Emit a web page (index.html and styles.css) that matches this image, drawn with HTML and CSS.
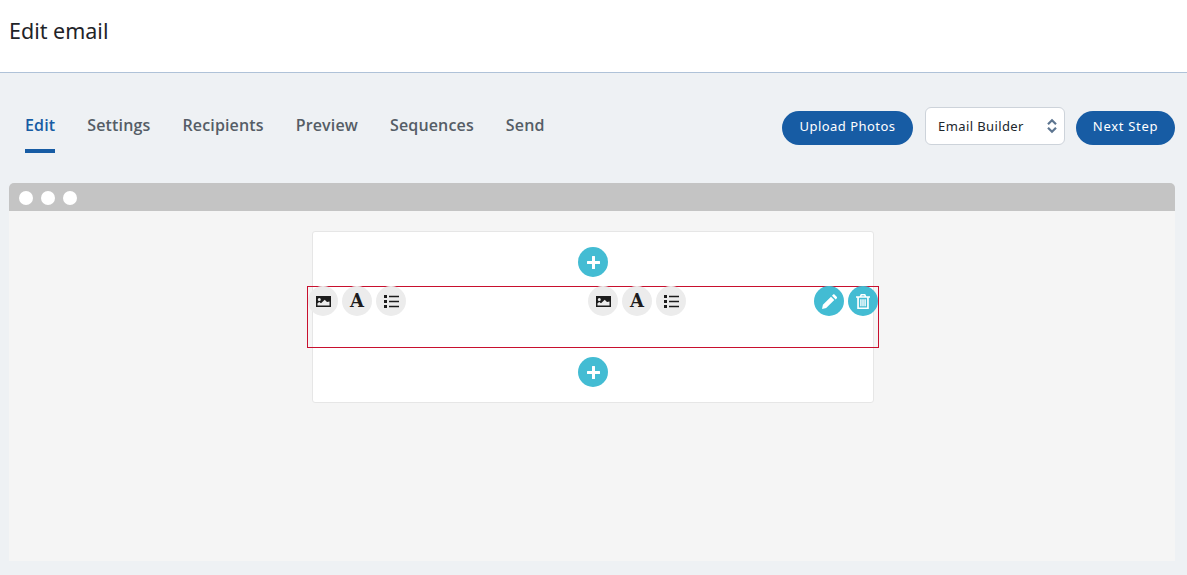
FILE: index.html
```html
<!DOCTYPE html>
<html lang="en">
<head>
<meta charset="utf-8">
<title>Edit email</title>
<link rel="stylesheet" href="styles.css">
</head>
<body>
<header class="page-header"><h1 class="page-title">Edit email</h1></header>
<main class="content">
  <div class="toolbar">
    <nav class="tabs">
      <a class="tab active">Edit</a>
      <a class="tab">Settings</a>
      <a class="tab">Recipients</a>
      <a class="tab">Preview</a>
      <a class="tab">Sequences</a>
      <a class="tab">Send</a>
    </nav>
    <div class="actions">
      <button class="pill upload">Upload Photos</button>
      <div class="select"><span>Email Builder</span>
        <svg class="updown" viewBox="0 0 10 16"><path d="M1 6.200 5 2.200 9 6.200M1 9.800 5 13.800 9 9.800" fill="none" stroke="#5d7590" stroke-width="2.200"/></svg>
      </div>
      <button class="pill next">Next Step</button>
    </div>
  </div>
  <section class="window">
    <div class="window-bar"><i class="dot"></i><i class="dot"></i><i class="dot"></i></div>
    <div class="window-body">
      <div class="card">
        <div class="add-zone top"><button class="round teal"><svg class="i-plus" viewBox="0 0 13 13"><path d="M5 .5Q5 0 5.500 0h2q.5 0 .5.500V5h4.500q.5 0 .5.500v2q0 .5-.5.500H8v4.500q0 .5-.5.500h-2q-.5 0-.5-.5V8H.5Q0 8 0 7.500v-2Q0 5 .5 5H5z" fill="#fff"/></svg></button></div>
        <div class="row-box">
          <div class="tools">
            <button class="round grey"><svg class="i-image" viewBox="0 0 15 11"><path fill-rule="evenodd" d="M0 0h15v11H0zM3.300 2a1.500 1.500 0 1 1 0 3 1.500 1.500 0 0 1 0-3zM1.500 9.500V7.200l1.800-1.300 1.700 1.300 3.700-3.500 2.300 2.200 2.500-.4v4z" fill="#1c1c1c"/></svg></button>
            <button class="round grey letter">A</button>
            <button class="round grey"><svg class="i-list" viewBox="0 0 15 13"><path d="M0 0h3v3H0zM0 5h3v3H0zM0 10h3v3H0zM5 .7h10v1.600H5zM5 5.700h10v1.600H5zM5 10.700h10v1.600H5z" fill="#1c1c1c"/></svg></button>
          </div>
          <div class="tools second">
            <button class="round grey"><svg class="i-image" viewBox="0 0 15 11"><path fill-rule="evenodd" d="M0 0h15v11H0zM3.300 2a1.500 1.500 0 1 1 0 3 1.500 1.500 0 0 1 0-3zM1.500 9.500V7.200l1.800-1.300 1.700 1.300 3.700-3.500 2.300 2.200 2.500-.4v4z" fill="#1c1c1c"/></svg></button>
            <button class="round grey letter">A</button>
            <button class="round grey"><svg class="i-list" viewBox="0 0 15 13"><path d="M0 0h3v3H0zM0 5h3v3H0zM0 10h3v3H0zM5 .7h10v1.600H5zM5 5.700h10v1.600H5zM5 10.700h10v1.600H5z" fill="#1c1c1c"/></svg></button>
          </div>
          <div class="tools third">
            <button class="round teal"><svg class="i-pencil" viewBox="0 0 15 15"><path d="M0 15l.9-4.200L9 2.700l3.300 3.300-8.100 8.100zM10 1.700l.9-.9c.6-.6 1.300-.6 1.800-.1l2 2c.5.500.5 1.200-.1 1.800l-.9.900z" fill="#fff"/></svg></button>
            <button class="round teal"><svg class="i-trash" viewBox="0 0 14 15"><path fill-rule="evenodd" d="M0 2.200h3.700L4.800 0h4.400l1.100 2.200H14v1.600h-1.200V15H1.200V3.800H0zM5.400 2.200h3.200l-.4-.8H5.800zM2.900 3.800v9.600h8.200V3.800zM4.200 5.300h1.400v6.900H4.200zM6.300 5.300h1.400v6.900H6.300zM8.400 5.300h1.400v6.900H8.400z" fill="#fff"/></svg></button>
          </div>
        </div>
        <div class="add-zone bottom"><button class="round teal"><svg class="i-plus" viewBox="0 0 13 13"><path d="M5 .5Q5 0 5.500 0h2q.5 0 .5.500V5h4.500q.5 0 .5.500v2q0 .5-.5.500H8v4.500q0 .5-.5.500h-2q-.5 0-.5-.5V8H.5Q0 8 0 7.500v-2Q0 5 .5 5H5z" fill="#fff"/></svg></button></div>
      </div>
    </div>
  </section>
</main>
</body>
</html>
```

FILE: styles.css
```css
* { box-sizing: border-box; }
html, body { margin: 0; height: 100%; }
body {
  background: #eef1f4;
  font-family: "Open Sans", "Noto Sans", sans-serif;
  overflow: hidden;
}
.page-header {
  height: 73px;
  background: #fff;
  border-bottom: 1px solid #afc2d8;
  padding: 17px 9px 0;
}
.page-title {
  margin: 0;
  font: 400 21.5px/28px "Noto Sans", sans-serif;
  color: #1f2429;
}
.content { padding: 0 12px 0 9px; }
.toolbar {
  display: flex;
  justify-content: space-between;
  height: 110px;
}
.tabs {
  display: flex;
  gap: 32px;
  padding: 39px 0 0 16px;
}
.tab {
  height: 41px;
  font-size: 16px;
  font-weight: 600;
  line-height: 26px;
  letter-spacing: .15px;
  color: #555d66;
}
.tab.active {
  color: #175ca4;
  border-bottom: 4px solid #175ca4;
}
.actions {
  display: flex;
  align-items: flex-start;
  padding-top: 34px;
}
.pill {
  height: 34px;
  margin-top: 4px;
  padding: 0 0 5px;
  border: 0;
  border-radius: 17px;
  background: #175ca4;
  color: #fff;
  font: 400 13px "Noto Sans", sans-serif;
  letter-spacing: .45px;
}
.upload { width: 131px; }
.next { width: 99px; letter-spacing: .7px; }
.select {
  width: 140px;
  height: 38px;
  margin: 0 11px 0 12px;
  padding: 0 12px;
  display: flex;
  align-items: center;
  justify-content: space-between;
  background: #fff;
  border: 1px solid #cdd3da;
  border-radius: 6px;
  color: #20262c;
  font: 400 13px "Noto Sans", sans-serif;
  letter-spacing: .4px;
}
.updown { width: 10px; height: 16px; margin-right: -5px; }
.window { width: 1166px; }
.window-bar {
  height: 28px;
  background: #c4c4c4;
  border-radius: 5px 5px 0 0;
  display: flex;
  align-items: center;
  gap: 8px;
  padding: 2px 10px 0;
}
.dot { width: 14px; height: 14px; border-radius: 50%; background: #fff; }
.window-body {
  height: 350px;
  background: #f5f5f5;
  padding-top: 20px;
}
.card {
  width: 562px;
  height: 172px;
  margin-left: 303px;
  background: #fff;
  border: 1px solid #e6e6e6;
  border-radius: 3px;
}
.add-zone { display: flex; justify-content: center; }
.add-zone.top { height: 54px; padding-top: 15px; }
.add-zone.bottom { padding-top: 9px; }
.round {
  width: 30px;
  height: 30px;
  padding: 0;
  border: 0;
  border-radius: 50%;
  display: flex;
  align-items: center;
  justify-content: center;
  flex: none;
}
.teal { background: #43bcd3; }
.grey { background: #ececec; }
.letter {
  font: 700 18px/30px "DejaVu Serif", serif;
  color: #1c1c1c;
}
.i-plus { width: 13px; height: 13px; }
.i-image { width: 15px; height: 11px; }
.i-list { width: 15px; height: 13px; }
.i-pencil { width: 15px; height: 15px; }
.i-trash { width: 14px; height: 15px; }
.row-box {
  height: 62px;
  margin: 0 -6px;
  border: 1px solid #c8102e;
  display: flex;
  align-items: flex-start;
}
.tools { display: flex; gap: 4px; margin-top: -1px; }
.second { margin-left: 182px; }
.third { margin-left: 128px; }
```
